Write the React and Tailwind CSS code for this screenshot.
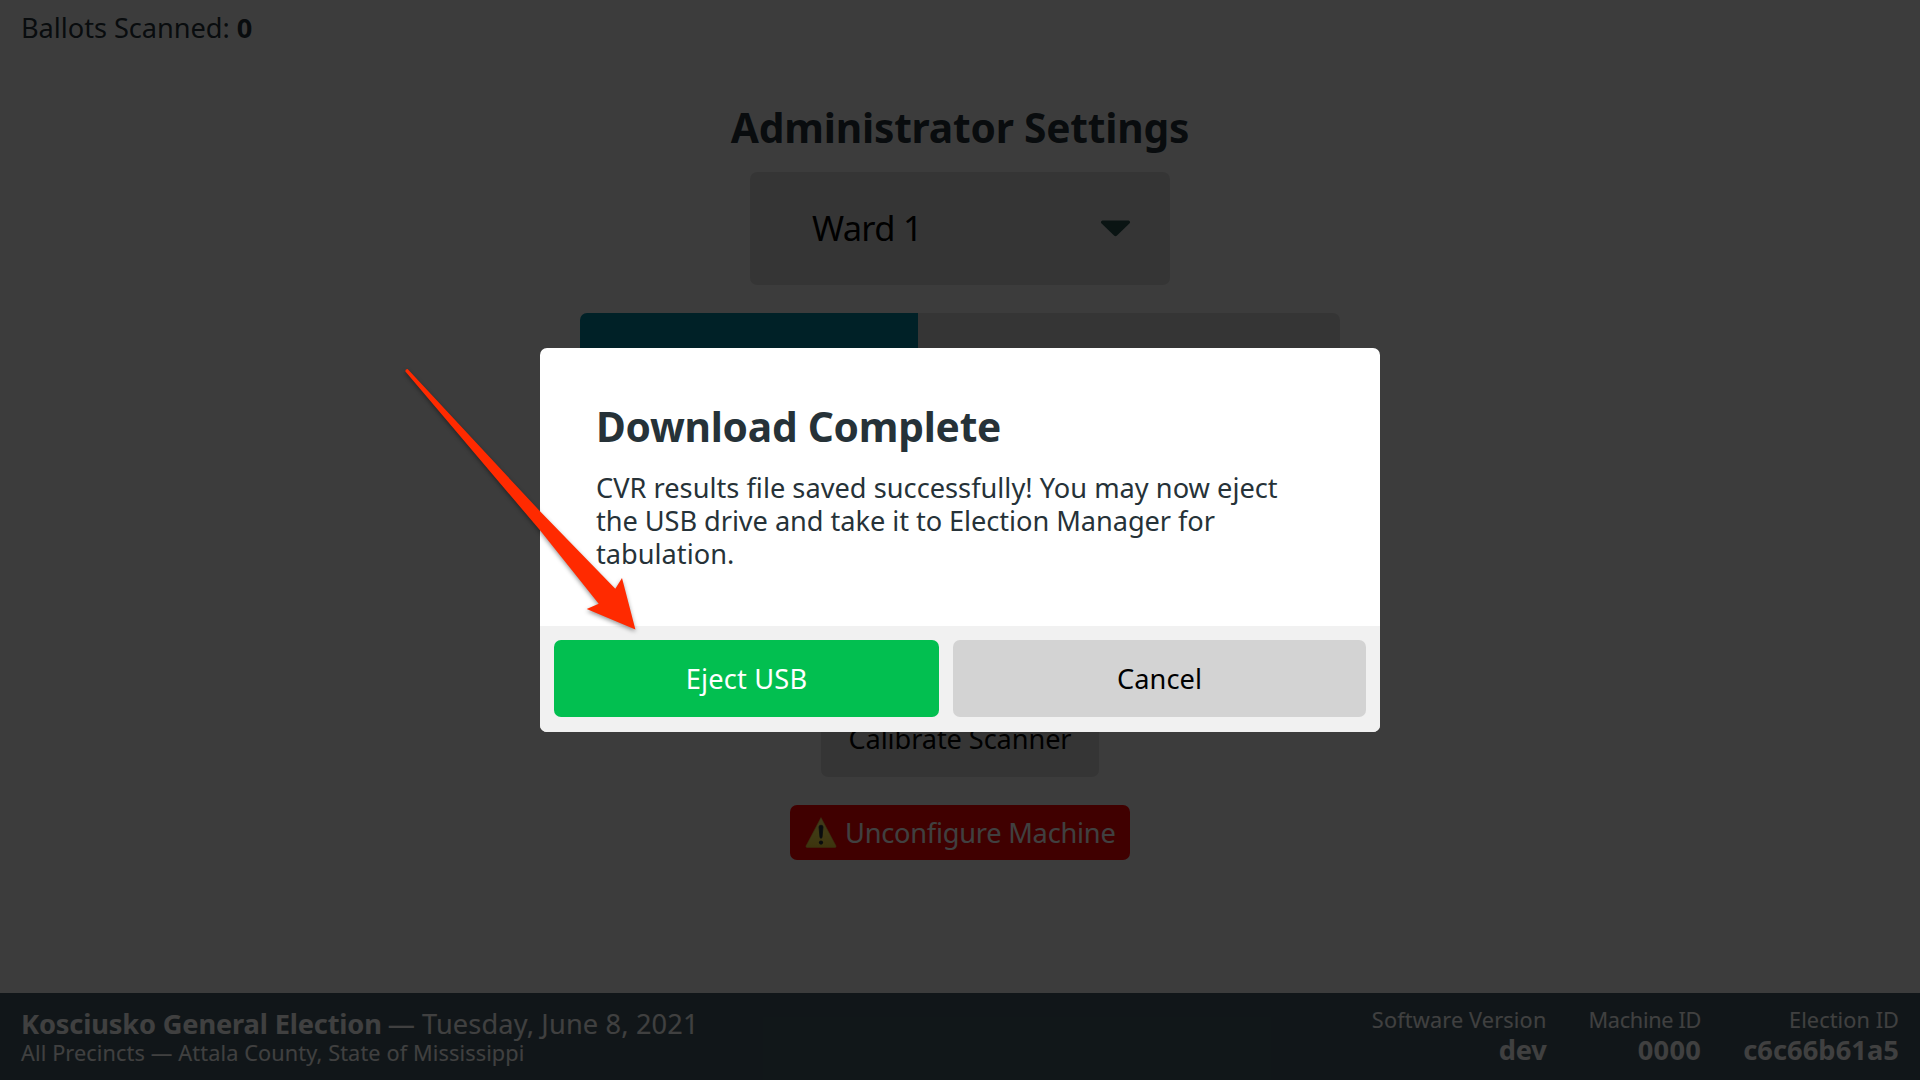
function WarningIcon() {
  return (
    <svg className="mr-[8px] h-[31px] w-[32px] shrink-0" viewBox="0 0 32 31">
      <defs>
        <linearGradient id="warn" x1="0" y1="0" x2="0" y2="1">
          <stop offset="0" stopColor="#ffe070" />
          <stop offset="0.5" stopColor="#ffea50" />
          <stop offset="1" stopColor="#f2cf38" />
        </linearGradient>
      </defs>
      <path
        d="M16 0.6 31 29Q31.4 30.4 30 30.4H2Q0.6 30.4 1 29Z"
        fill="url(#warn)"
        stroke="#e0b840"
        strokeWidth="0.6"
        strokeLinejoin="round"
      />
      <path d="M14 10Q14 8.2 16 8.2T18 10L17 20.6Q16 22 15 20.6Z" fill="#263238" stroke="#263238" strokeWidth="0.8" />
      <circle cx="16" cy="25.6" r="2.1" fill="#263238" />
    </svg>
  );
}

function Stat({ label, labelClass, value, valueClass }) {
  return (
    <div className="flex flex-col items-end">
      <span className={`text-[21.7px] leading-[27px] ${labelClass}`}>{label}</span>
      <span className={`text-[27.2px] leading-[33px] font-bold ${valueClass}`}>{value}</span>
    </div>
  );
}

function ArrowAnnotation() {
  return (
    <svg
      className="pointer-events-none absolute top-[360px] left-[395px] h-[285px] w-[255px] [filter:drop-shadow(0_2px_2px_rgba(0,0,0,0.4))]"
      viewBox="395 360 255 285"
    >
      <path
        d="M405.4 371.6Q405 369.2 407.6 369L540 511.3L615.3 588.7L622 578L635.4 629.4L586.7 609L598.7 603.7L540 530.3Z"
        fill="#ff2a00"
      />
    </svg>
  );
}

export default function App() {
  return (
    <div className="relative flex h-[1080px] w-[1920px] flex-col overflow-hidden bg-[#f0f0f0] font-['Noto_Sans',sans-serif] text-[27.2px] leading-[33px] text-[#263238]">
      <header className="h-[102px] pt-[11px] pl-[21px] tracking-[-0.05px]">
        Ballots Scanned: <strong>0</strong>
      </header>

      <main className="flex flex-1 flex-col items-center">
        <h1 className="text-[40.7px] leading-[50px] font-bold tracking-[-0.2px]">Administrator Settings</h1>
        <div className="mt-[20px] flex h-[113px] w-[420px] items-center justify-between rounded-[7px] bg-[#d3d3d3] pr-[39px] pl-[62px] text-black">
          <span className="pb-[2px] text-[34.5px] tracking-[-0.7px]">Ward 1</span>
          <svg className="h-[17px] w-[31px]" viewBox="0 0 31 17">
            <path
              d="M2.4 0.5H28.6Q31.2 1.4 29.4 3.6L17 15.6Q15.5 17 14 15.6L1.6 3.6Q-0.2 1.4 2.4 0.5Z"
              fill="#28504c"
            />
          </svg>
        </div>
        <div className="mt-[28px] flex h-[77px] w-[760px] overflow-hidden rounded-[7px]">
          <div className="w-[338px] bg-[#00829b]" />
          <div className="flex-1 bg-[#d3d3d3]" />
        </div>
        <button className="mt-[310px] h-[77px] w-[278px] rounded-[7px] bg-[#d3d3d3] tracking-[-0.1px] text-black">
          Calibrate Scanner
        </button>
        <button className="mt-[28px] flex h-[55px] w-[340px] items-center rounded-[7px] bg-[#ff0000] pl-[15px] tracking-[-0.23px] text-white">
          <WarningIcon />
          <span>Unconfigure Machine</span>
        </button>
      </main>

      <footer className="flex h-[87px] justify-between bg-[#455a64] px-[21px] text-white">
        <div className="pt-[14px]">
          <div className="flex gap-[7px]">
            <strong className="tracking-[-0.13px]">Kosciusko General Election</strong>
            <span className="-ml-px">—</span>
            <span className="tracking-[0.15px]">Tuesday, June 8, 2021</span>
          </div>
          <div className="-mt-px text-[21.7px] leading-[27px] tracking-[0.11px]">
            All Precincts — Attala County, State of Mississippi
          </div>
        </div>
        <div className="flex gap-[42px] pt-[13px]">
          <Stat label="Software Version" labelClass="tracking-[0.15px]" value="dev" valueClass="tracking-[-0.2px]" />
          <Stat label="Machine ID" labelClass="tracking-[-0.3px]" value="0000" valueClass="tracking-[0.3px]" />
          <Stat label="Election ID" labelClass="tracking-[0.08px]" value="c6c66b61a5" valueClass="tracking-[0.1px]" />
        </div>
      </footer>

      <div className="absolute inset-0 flex items-start justify-center bg-black/75 pt-[348px]">
        <section className="flex h-[384px] w-[840px] flex-col overflow-hidden rounded-[7px] bg-white">
          <div className="h-[278px] pt-[53px] pl-[56px]">
            <h2 className="text-[40.7px] leading-[50px] font-bold tracking-[-0.24px]">Download Complete</h2>
            <p className="mt-[20px] whitespace-nowrap">
              <span className="tracking-[0.02px]">CVR results file saved successfully! You may now eject</span>
              <br />
              <span className="tracking-[-0.06px]">the USB drive and take it to Election Manager for</span>
              <br />
              tabulation.
            </p>
          </div>
          <div className="flex flex-1 gap-[14px] bg-[#f1f1f1] p-[14px]">
            <button className="h-[77px] w-[385px] rounded-[7px] bg-[#02bf50] tracking-[0.2px] text-white">
              Eject USB
            </button>
            <button className="h-[77px] w-[413px] rounded-[7px] bg-[#d3d3d3] tracking-[0.1px] text-black">
              Cancel
            </button>
          </div>
        </section>
      </div>

      <ArrowAnnotation />
    </div>
  );
}
